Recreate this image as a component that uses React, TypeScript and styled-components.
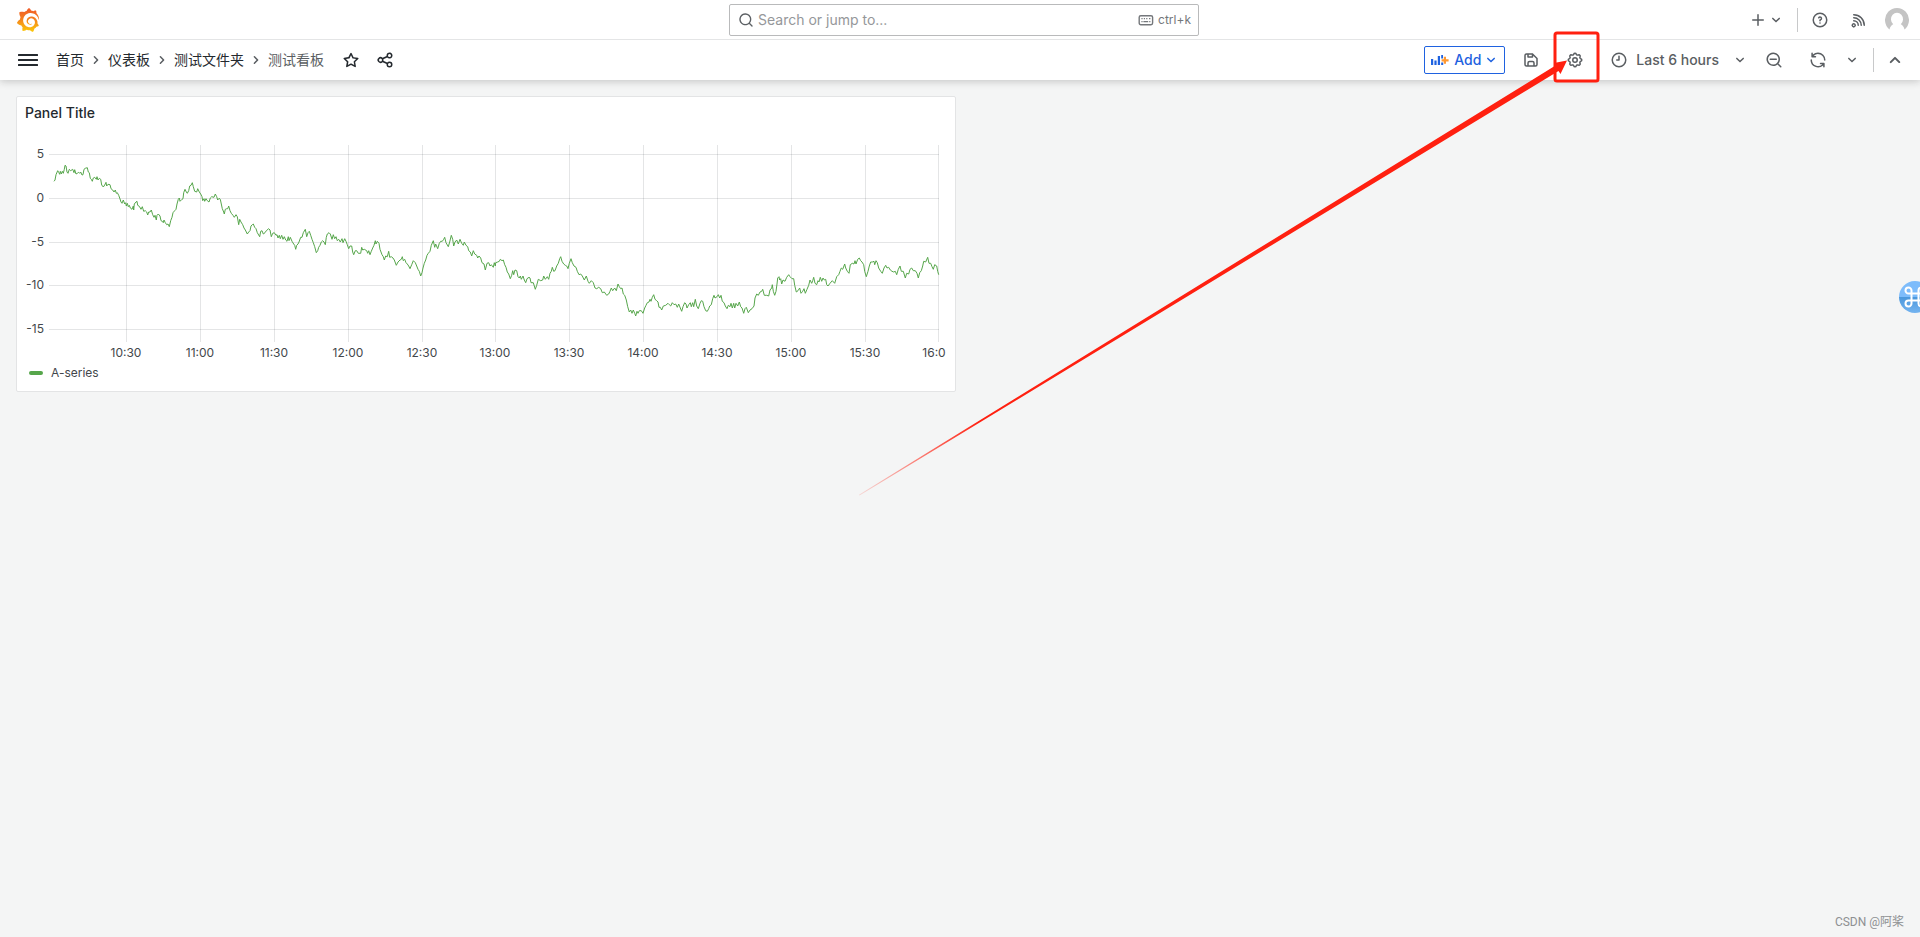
import React from "react";
import styled, { createGlobalStyle } from "styled-components";
import { SiGrafana } from "react-icons/si";

const GlobalStyle = createGlobalStyle`
  *, *::before, *::after { box-sizing: border-box; }
  html, body { margin: 0; padding: 0; }
  body {
    background: #f4f5f5;
    color: #24292e;
    font-family: Inter, "Noto Sans CJK SC", sans-serif;
    font-size: 14px;
    line-height: 22px;
  }
  button, input { font: inherit; }
`;

/* ---------- icons ---------- */

const paths = {
  angleRight:
    "M14.83,11.29,10.59,7.05a1,1,0,0,0-1.42,0,1,1,0,0,0,0,1.41L12.71,12,9.17,15.54a1,1,0,0,0,0,1.41,1,1,0,0,0,.71.29,1,1,0,0,0,.71-.29l4.24-4.24A1,1,0,0,0,14.83,11.29Z",
  angleDown:
    "M17,9.17a1,1,0,0,0-1.41,0L12,12.71,8.46,9.17a1,1,0,0,0-1.41,0,1,1,0,0,0,0,1.42l4.24,4.24a1,1,0,0,0,1.42,0L17,10.59A1,1,0,0,0,17,9.17Z",
  angleUp:
    "M17,13.41,12.71,9.17a1,1,0,0,0-1.42,0L7.05,13.41a1,1,0,0,0,0,1.42,1,1,0,0,0,1.41,0L12,11.29l3.54,3.54a1,1,0,0,0,.7.29,1,1,0,0,0,.71-.29A1,1,0,0,0,17,13.41Z",
  search:
    "M21.71,20.29,18,16.61A9,9,0,1,0,16.61,18l3.68,3.68a1,1,0,0,0,1.42,0A1,1,0,0,0,21.71,20.29ZM11,18a7,7,0,1,1,7-7A7,7,0,0,1,11,18Z",
  searchMinus:
    "M21.71,20.29,18,16.61A9,9,0,1,0,16.61,18l3.68,3.68a1,1,0,0,0,1.42,0A1,1,0,0,0,21.71,20.29ZM11,18a7,7,0,1,1,7-7A7,7,0,0,1,11,18Zm4-8H7a1,1,0,0,0,0,2h8a1,1,0,0,0,0-2Z",
  plus: "M19,11H13V5a1,1,0,0,0-2,0v6H5a1,1,0,0,0,0,2h6v6a1,1,0,0,0,2,0V13h6a1,1,0,0,0,0-2Z",
  clock:
    "M12,2A10,10,0,1,0,22,12,10,10,0,0,0,12,2Zm0,18a8,8,0,1,1,8-8A8,8,0,0,1,12,20ZM12,6a1,1,0,0,0-1,1v4H9a1,1,0,0,0,0,2h3a1,1,0,0,0,1-1V7A1,1,0,0,0,12,6Z",
  question:
    "M11.29,15.29a1.58,1.58,0,0,0-.12.15.76.76,0,0,0-.09.18.64.64,0,0,0-.06.18,1.36,1.36,0,0,0,0,.2.84.84,0,0,0,.08.38.9.9,0,0,0,.54.54.94.94,0,0,0,.76,0,.9.9,0,0,0,.54-.54A1,1,0,0,0,13,16a1,1,0,0,0-.29-.71A1,1,0,0,0,11.29,15.29ZM12,2A10,10,0,1,0,22,12,10,10,0,0,0,12,2Zm0,18a8,8,0,1,1,8-8A8,8,0,0,1,12,20ZM12,7A3,3,0,0,0,9.4,8.5a1,1,0,1,0,1.73,1A1,1,0,0,1,12,9a1,1,0,0,1,0,2,1,1,0,0,0-1,1v1a1,1,0,0,0,2,0v-.18A3,3,0,0,0,12,7Z",
  save: "M20.71,9.29l-6-6a1,1,0,0,0-.32-.21A1.09,1.09,0,0,0,14,3H6A3,3,0,0,0,3,6V18a3,3,0,0,0,3,3H18a3,3,0,0,0,3-3V10A1,1,0,0,0,20.71,9.29ZM9,5h4V7H9Zm6,14H9V16a1,1,0,0,1,1-1h4a1,1,0,0,1,1,1Zm4-1a1,1,0,0,1-1,1H17V16a3,3,0,0,0-3-3H10a3,3,0,0,0-3,3v3H6a1,1,0,0,1-1-1V6A1,1,0,0,1,6,5H7V8A1,1,0,0,0,8,9h6a1,1,0,0,0,1-1V6.41l4,4Z",
  share:
    "M18,14a4,4,0,0,0-3.08,1.48l-5.1-2.35a3.64,3.64,0,0,0,0-2.26l5.1-2.35A4,4,0,1,0,14,6a4.17,4.17,0,0,0,.07.71L8.79,9.14a4,4,0,1,0,0,5.72l5.28,2.43A4.17,4.17,0,0,0,14,18a4,4,0,1,0,4-4ZM18,4a2,2,0,1,1-2,2A2,2,0,0,1,18,4ZM6,14a2,2,0,1,1,2-2A2,2,0,0,1,6,14Zm12,6a2,2,0,1,1,2-2A2,2,0,0,1,18,20Z",
  star: "M22,9.67A1,1,0,0,0,21.14,9l-5.69-.83L12.9,3a1,1,0,0,0-1.8,0L8.55,8.16,2.86,9a1,1,0,0,0-.81.68,1,1,0,0,0,.25,1l4.13,4-1,5.68A1,1,0,0,0,6.9,21.44L12,18.77l5.1,2.67a.93.93,0,0,0,.46.12,1,1,0,0,0,.59-.19,1,1,0,0,0,.4-1l-1-5.68,4.13-4A1,1,0,0,0,22,9.67Zm-6.15,4a1,1,0,0,0-.29.88l.72,4.2-3.76-2a1.06,1.06,0,0,0-.94,0l-3.76,2,.72-4.2a1,1,0,0,0-.29-.88l-3-3,4.21-.61a1,1,0,0,0,.76-.55L12,5.7l1.88,3.82a1,1,0,0,0,.76.55l4.21.61Z",
  sync: "M19.91,15.51H15.38a1,1,0,0,0,0,2h2.4A8,8,0,0,1,4,12a1,1,0,0,0-2,0,10,10,0,0,0,16.88,7.23V21a1,1,0,0,0,2,0V16.5A1,1,0,0,0,19.91,15.51ZM12,2A10,10,0,0,0,5.12,4.77V3a1,1,0,0,0-2,0V7.5a1,1,0,0,0,1,1h4.5a1,1,0,0,0,0-2H6.22A8,8,0,0,1,20,12a1,1,0,0,0,2,0A10,10,0,0,0,12,2Z",
  rss: "M2.88,16.88a3,3,0,0,0,0,4.24,3,3,0,0,0,4.24,0,3,3,0,0,0-4.24-4.24Zm2.83,2.83a1,1,0,0,1-1.42-1.42,1,1,0,0,1,1.42,0A1,1,0,0,1,5.71,19.71ZM5,12a1,1,0,0,0,0,2,5,5,0,0,1,5,5,1,1,0,0,0,2,0,7,7,0,0,0-7-7ZM5,8a1,1,0,0,0,0,2,9,9,0,0,1,9,9,1,1,0,0,0,2,0,11,11,0,0,0-11-11ZM5,4A1,1,0,0,0,5,6,13,13,0,0,1,18,19a1,1,0,0,0,2,0A15,15,0,0,0,5,4Z",
  menu: "M1,4.800h22a1,1,0,0,1,0,2.400H1A1,1,0,0,1,1,4.800ZM1,10.800h22a1,1,0,0,1,0,2.400H1a1,1,0,0,1,0-2.400ZM1,16.800h22a1,1,0,0,1,0,2.400H1a1,1,0,0,1,0-2.400Z",
};

const Svg = styled.svg<{ $size: number }>`
  display: block;
  flex: none;
  width: ${(p) => p.$size}px;
  height: ${(p) => p.$size}px;
  fill: currentColor;
`;

const Icon = ({ name, size = 18 }: { name: keyof typeof paths; size?: number }) => (
  <Svg $size={size} viewBox="0 0 24 24" aria-hidden="true">
    <path d={paths[name]} />
  </Svg>
);

/* Gear with eight rounded teeth */
const gearPath = (() => {
  const steps = 96;
  const pts: string[] = [];
  for (let i = 0; i < steps; i++) {
    const a = (i / steps) * Math.PI * 2;
    const wave = Math.cos(a * 8);
    const r = 8.1 + Math.sign(wave) * Math.pow(Math.abs(wave), 0.6) * 0.9;
    pts.push(`${(12 + r * Math.cos(a)).toFixed(2)},${(12 + r * Math.sin(a)).toFixed(2)}`);
  }
  return `M${pts.join("L")}Z`;
})();

const GearIcon = () => (
  <Svg $size={18} viewBox="0 0 24 24" aria-hidden="true">
    <g fill="none" stroke="currentColor" strokeWidth="2" strokeLinejoin="round">
      <path d={gearPath} />
      <circle cx="12" cy="12" r="3" />
    </g>
  </Svg>
);

const KeyboardIcon = () => (
  <Svg $size={16} viewBox="0 0 16 16" aria-hidden="true">
    <rect x="1.2" y="3.7" width="13.4" height="9" rx="1.6" fill="none" stroke="currentColor" strokeWidth="1.4" />
    <path
      d="M3.4 6.7h1.2M5.8 6.7h1.2M8.2 6.7h1.2M11 6.7h1.4M3.4 9.7h1.2M5.4 9.7h4.8M11.2 9.7h1.2"
      stroke="currentColor"
      strokeWidth="1.3"
    />
  </Svg>
);

const PanelAddIcon = () => (
  <Svg $size={18} viewBox="0 0 18 18" aria-hidden="true">
    <path d="M0 8h2.200v6H0zM3.400 9.500h2.200V14H3.400zM6.800 5h2.200v9H6.800zM10.200 11.500h2V14h-2zM10.200 4h1.800v3.400h-1.800z" />
    <path d="M12.800 5.800h2.200v2.400h2.600v2.200H15v2.400h-2.200v-2.400h-2.200V8.200h2.200z" fill="#ff9830" />
  </Svg>
);

/* ---------- top bar ---------- */

const Header = styled.header`
  position: relative;
  background: #fff;
  box-shadow: 0 1px 8px rgba(24, 26, 27, 0.24);
`;

const TopBar = styled.div`
  display: grid;
  grid-template-columns: 3fr 2fr 3fr;
  gap: 8px;
  align-items: center;
  height: 40px;
  padding: 0 8px 0 16px;
  border-bottom: 1px solid #e4e5e6;
`;

const HomeLink = styled.a`
  display: flex;
  justify-self: start;
  svg { display: block; width: 24px; height: 24px; fill: url(#brand); }
`;

const SearchBox = styled.label`
  display: flex;
  align-items: center;
  gap: 4px;
  height: 32px;
  padding: 0 7px 0 8px;
  border: 1px solid #b9babb;
  border-radius: 2px;
  color: #5c6064;
`;

const SearchInput = styled.input`
  flex: 1;
  min-width: 0;
  padding: 0;
  border: 0;
  outline: 0;
  background: none;
  color: #24292e;
  &::placeholder { color: #95979a; opacity: 1; }
`;

const Shortcut = styled.span`
  display: flex;
  align-items: center;
  gap: 4px;
  color: #74777b;
  font-size: 12px;
  line-height: 18px;
`;

const Actions = styled.div`
  display: flex;
  align-items: center;
  justify-content: flex-end;
`;

const Divider = styled.span<{ $before?: number; $after?: number }>`
  width: 1px;
  height: 24px;
  margin: 0 ${(p) => p.$after ?? 0}px 0 ${(p) => p.$before ?? 0}px;
  background: #c8c9ca;
`;

const IconButton = styled.button<{ $width?: number; $strong?: boolean }>`
  display: flex;
  flex: none;
  align-items: center;
  justify-content: center;
  width: ${(p) => p.$width ?? 32}px;
  height: 32px;
  padding: 0;
  border: 0;
  background: none;
  color: ${(p) => (p.$strong ? "#24292e" : "#5a5e62")};
  cursor: pointer;
`;

/* ---------- navigation bar ---------- */

const NavBar = styled.nav`
  display: flex;
  align-items: center;
  height: 40px;
  padding: 0 9px 0 12px;
`;

const Crumbs = styled.ol`
  display: flex;
  align-items: center;
  margin: 0 10px 0 12px;
  padding: 0;
  list-style: none;
`;

const Crumb = styled.li`
  display: flex;
  align-items: center;
  color: #5a5e62;
  svg { margin: 0 3px; }
`;

const CrumbLink = styled.a`
  color: #24292e;
  text-decoration: none;
`;

const NavActions = styled(Actions)`
  flex: 1;
`;

const AddButton = styled.button`
  display: flex;
  align-items: center;
  height: 28px;
  margin-right: 10px;
  padding: 0 4px 0 6px;
  border: 1px solid #1f62e0;
  border-radius: 2px;
  background: none;
  color: #1f62e0;
  font-weight: 500;
  cursor: pointer;
  span { margin: 0 1px 0 5px; }
`;

const TimeButton = styled(IconButton)`
  width: auto;
  gap: 8px;
  padding: 0 7px;
  font-weight: 500;
  span { margin-right: 4px; }
`;

/* ---------- dashboard ---------- */

const Dashboard = styled.main`
  display: grid;
  grid-template-columns: 1fr 1fr;
  gap: 8px;
  padding: 16px;
`;

const Panel = styled.section`
  min-width: 0;
  border: 1px solid #e3e4e5;
  border-radius: 2px;
  background: #fff;
`;

const PanelTitle = styled.h2`
  margin: 0;
  padding: 0 8px;
  font-size: 14px;
  font-weight: 500;
  line-height: 32px;
`;

const PanelBody = styled.div`
  padding: 8px 8px 6px;
`;

const Chart = styled.svg`
  display: block;
  width: 100%;
  height: auto;
  overflow: hidden;
  text { font-size: 12px; fill: #43474b; }
`;

const Legend = styled.div`
  display: flex;
  align-items: center;
  gap: 8px;
  height: 24px;
  padding-left: 4px;
  color: #43474b;
  font-size: 12px;
`;

const LegendMark = styled.span`
  width: 14px;
  height: 4px;
  border-radius: 2px;
  background: #56a64b;
`;

/* Series samples, x and y in thirds of a pixel from the canvas corner */
const sampleGroups: { offset: number; points: string }[] = [
  {
    offset: 0,
    points:
      "162,154 165,150 168,134 173,122 176,127 179,133 181,124 184,132 187,124 190,130 193,118 195,106 198,108 201,126 204,130 208,118 212,122 218,118 222,128 224,119 228,132 232,130 236,127 239,130 242,126 246,135 249,134 252,118 256,115 262,113 265,126 268,128 271,145 274,148 277,154 280,144 284,142 289,148 291,140 294,150 298,145 302,148 305,165 310,171 314,165 318,157 320,168 324,163 330,164 333,176 338,180 342,186 346,180 349,190 352,188 356,196 359,204 363,216 366,220 370,210 374,222 377,218 379,228 382,220 385,230 388,226 391,234 396,238 400,228 401,240 403,222 408,216 411,214 413,226 418,229 423,238 427,230 431,244 436,242 440,246 443,255 446,246 450,246 454,240 458,254 462,262 465,256 469,270 471,256 475,252 480,258 483,272 487,274 490,278 492,270 496,278 500,284 504,282 508,290 512,272 516,262 519,248 524,242 528,238 531,222 535,208 538,204 540,214 546,208 549,206 551,188 555,178 559,186 562,190 566,182 569,168 573,166 577,158 580,170 584,184 590,186 593,176 598,186 602,192 606,200 608,212 612,206 614,214 618,206 622,212 627,216 631,204 635,200 642,202 646,192 650,200 653,210 657,205 661,208 664,222 667,236 671,246 673,252 676,238 680,236 683,236 686,228 690,242 694,250 699,256 703,262 708,254 712,260 716,284 719,268 723,276 728,284 732,294 736,300 742,312 746,306 750,302 753,288 757,284 760,282 764,292 768,296 772,308 779,320 782,304 786,302 790,312 795,308 799,302 806,296 810,300 814,320 818,310 823,308 828,316 831,314 834,324 838,316 841,326 845,316 849,328 853,320 857,330 861,334 865,320 867,332 871,322 876,334 881,342 884,346 887,358 890,346 894,342 897,336 902,322 906,322 910,308 916,298 920,320 924,308 928,304 932,316 936,328 940,338 944,350 949,368 953,362 956,352 960,346 964,336 968,332 972,336 976,344 979,322 982,312",
  },
  {
    offset: 960,
    points:
      "27,308 31,312 36,328 40,314 44,326 48,320 52,332 56,328 61,336 66,326 69,338 74,326 78,334 82,344 86,356 90,348 95,348 98,366 101,374 106,362 110,362 115,370 122,370 125,352 128,360 133,358 140,362 143,370 146,362 150,374 154,364 158,354 162,346 166,332 168,342 172,334 177,340 180,358 186,374 190,380 193,390 197,378 202,380 206,364 209,382 214,380 219,384 223,390 229,406 234,396 240,390 244,388 247,380 250,392 254,388 258,398 262,402 266,408 270,416 275,404 280,392 286,398 290,408 294,418 298,424 302,438 306,428 309,414 313,400 317,390 321,376 325,370 330,364 334,346 340,332 344,352 347,342 353,356 358,340 362,334 367,334 371,328 374,322 378,338 385,350 389,336 394,316 398,328 401,348 405,336 410,330 415,342 420,328 425,340 430,346 433,336 438,346 443,350 446,362 451,366 455,378 460,362 464,372 470,376 473,384 477,378 482,384 486,398 492,402 496,420 501,400 506,398 510,408 514,404 520,412 523,398 526,408 527,398 533,396 538,394 541,388 546,392 550,390 554,404 558,412 562,426 566,432 571,446 575,436 578,422 581,434 585,420 590,422 594,440 598,444 601,438 604,448 609,438 613,450 617,458 621,446 627,442 630,444 633,458 640,458 646,478 650,466 655,448 662,452 668,450 671,438 676,448 682,440 686,448 690,430 694,424 697,412 701,424 705,422 710,408 715,400 719,386 722,380 726,394 731,402 736,406 740,408 744,416 748,400 753,386 757,398 762,408 768,412 772,424 777,434 782,432 787,438 793,450 799,438 804,454 808,460 814,452 820,458 825,474 830,476 836,472 842,476 847,488 853,486 860,496 866,492 870,484 874,474 878,482 884,474 889,482 894,462 898,470 902,476 906,474 910,492 914,496 919,510 923,530 928,546 932,540 936,550 940,540 944,550 947,558 951,544 954,550 958,542 964,542 969,550",
  },
  {
    offset: 1920,
    points:
      "14,534 18,526 22,518 27,516 30,508 33,514 37,502 41,494 45,508 50,512 54,516 57,532 61,532 65,540 70,528 77,526 84,520 88,524 92,528 97,518 102,524 107,522 112,532 116,522 121,534 125,544 129,530 134,518 138,522 141,534 146,524 151,518 154,530 158,518 161,530 164,516 166,508 170,528 175,536 180,520 184,512 188,514 192,530 197,542 202,544 206,536 209,528 214,524 218,506 222,496 225,504 231,500 235,494 239,504 243,496 247,514 252,518 256,528 261,536 265,526 270,530 273,520 277,534 281,520 284,534 288,520 293,528 298,516 302,530 306,534 311,550 315,536 319,532 325,548 330,540 336,536 342,528 345,504 350,492 355,496 360,486 365,484 368,478 373,496 380,496 386,498 390,480 395,474 397,464 400,484 404,496 408,484 411,462 413,444 417,440 419,450 422,446 425,462 429,450 435,454 440,442 446,434 450,440 456,446 461,446 464,466 469,486 474,482 479,474 483,490 488,484 492,476 496,490 501,478 506,466 510,450 515,460 518,452 521,442 525,460 530,464 534,452 537,456 541,442 545,454 549,444 553,450 557,448 560,464 564,468 570,460 577,452 584,460 590,440 596,434 600,424 604,414 608,418 614,402 617,414 622,424 627,430 631,404 637,400 642,402 645,392 648,402 653,388 658,384 662,392 666,396 671,404 674,424 679,440 684,424 688,408 692,396 697,396 702,394 704,404 708,392 712,398 716,414 722,424 727,430 732,414 737,406 741,414 746,412 751,420 756,424 761,426 766,424 770,434 775,418 780,408 784,424 790,424 796,444 800,430 806,432 810,418 815,414 820,422 826,422 831,430 835,444 839,428 844,422 848,408 851,394 857,396 863,382 867,400 872,400 876,410 880,418 884,404 890,408 893,424 896,434",
  },
];

const seriesPoints = sampleGroups
  .flatMap(({ offset, points }) =>
    points.split(" ").map((pair) => {
      const [x, y] = pair.split(",").map(Number);
      return `${((x + offset) / 3 - 25).toFixed(1)},${(y / 3 - 7).toFixed(1)}`;
    })
  )
  .join(" ");

const yTicks = [
  { label: "5", y: 17 },
  { label: "0", y: 61 },
  { label: "-5", y: 105 },
  { label: "-10", y: 148 },
  { label: "-15", y: 192 },
];

const xTicks = [
  { label: "10:30", x: 101 },
  { label: "11:00", x: 175 },
  { label: "11:30", x: 249 },
  { label: "12:00", x: 323 },
  { label: "12:30", x: 397 },
  { label: "13:00", x: 470 },
  { label: "13:30", x: 544 },
  { label: "14:00", x: 618 },
  { label: "14:30", x: 692 },
  { label: "15:00", x: 766 },
  { label: "15:30", x: 840 },
  { label: "16:0", x: 909 },
];

const gridX = xTicks.map((t, i) => (i === xTicks.length - 1 ? 913 : t.x));

const TimeSeries = () => (
  <Chart viewBox="0 0 922 224" role="img" aria-label="A-series over the last 6 hours">
    <g stroke="#24292e" strokeOpacity="0.12">
      {yTicks.map((t) => (
        <line key={t.label} x1="24" x2="914" y1={t.y + 0.5} y2={t.y + 0.5} />
      ))}
      {gridX.map((x) => (
        <line key={x} x1={x + 0.5} x2={x + 0.5} y1="8" y2="205" />
      ))}
    </g>
    {yTicks.map((t) => (
      <text key={t.label} x="19" y={t.y + 4} textAnchor="end">
        {t.label}
      </text>
    ))}
    {xTicks.map((t) => (
      <text key={t.label} x={t.x} y="220" textAnchor="middle">
        {t.label}
      </text>
    ))}
    <polyline points={seriesPoints} fill="none" stroke="#56a64b" strokeWidth="1" />
  </Chart>
);

/* ---------- overlays ---------- */

const Annotation = styled.svg`
  position: absolute;
  top: 0;
  right: 0;
  width: 1080px;
  height: 520px;
  pointer-events: none;
`;

const AssistantButton = styled.button`
  position: absolute;
  top: 281px;
  right: -11px;
  width: 32px;
  height: 32px;
  padding: 0;
  border: 0;
  border-radius: 50%;
  background: linear-gradient(#7dbcfb 50%, #4a97dc 50%, #74b4f0);
  cursor: pointer;
`;

const Watermark = styled.span`
  position: absolute;
  right: 16px;
  bottom: 6px;
  color: #8e9092;
  font-family: Roboto, "Noto Sans CJK SC", sans-serif;
  font-size: 12px;
  line-height: 18px;
`;

const Page = styled.div`
  position: relative;
  min-height: 100vh;
  overflow: hidden;
`;

const crumbs = ["首页", "仪表板", "测试文件夹"];

export default function App() {
  return (
    <Page>
      <GlobalStyle />
      <Header>
        <TopBar>
          <HomeLink href="#home" aria-label="Grafana">
            <SiGrafana />
          </HomeLink>
          <SearchBox>
            <Icon name="search" size={16} />
            <SearchInput type="text" placeholder="Search or jump to..." aria-label="Search or jump to" />
            <Shortcut>
              <KeyboardIcon />
              ctrl+k
            </Shortcut>
          </SearchBox>
          <Actions>
            <IconButton $width={42} aria-label="New">
              <Icon name="plus" />
              <Icon name="angleDown" />
            </IconButton>
            <Divider $before={9} $after={6} />
            <IconButton aria-label="Help">
              <Icon name="question" />
            </IconButton>
            <IconButton $width={46} aria-label="News">
              <Icon name="rss" />
            </IconButton>
            <IconButton $width={30} aria-label="Profile">
              <Svg $size={24} viewBox="0 0 24 24">
                <path
                  d="M4.500 21.400A12 12 0 1 1 19.500 21.400C18.800 18.800 17.600 17.300 15.800 16.300A6 6.500 0 1 0 8.200 16.300C6.400 17.300 5.200 18.800 4.500 21.400Z"
                  fill="#c4c4c4"
                />
              </Svg>
            </IconButton>
          </Actions>
        </TopBar>
        <NavBar aria-label="Breadcrumbs">
          <IconButton $strong aria-label="Menu">
            <Icon name="menu" size={20} />
          </IconButton>
          <Crumbs>
            {crumbs.map((c) => (
              <Crumb key={c}>
                <CrumbLink href="#crumb">{c}</CrumbLink>
                <Icon name="angleRight" />
              </Crumb>
            ))}
            <Crumb aria-current="page">测试看板</Crumb>
          </Crumbs>
          <IconButton $width={34} $strong aria-label="Mark as favorite">
            <Icon name="star" />
          </IconButton>
          <IconButton $width={34} $strong aria-label="Share dashboard">
            <Icon name="share" />
          </IconButton>
          <NavActions>
            <AddButton>
              <PanelAddIcon />
              <span>Add</span>
              <Icon name="angleDown" />
            </AddButton>
            <IconButton aria-label="Save dashboard">
              <Icon name="save" />
            </IconButton>
            <IconButton $width={56} aria-label="Dashboard settings">
              <GearIcon />
            </IconButton>
            <TimeButton>
              <Icon name="clock" />
              <span>Last 6 hours</span>
              <Icon name="angleDown" />
            </TimeButton>
            <IconButton $width={36} aria-label="Zoom out">
              <Icon name="searchMinus" />
            </IconButton>
            <IconButton $width={52} aria-label="Refresh">
              <Icon name="sync" />
            </IconButton>
            <IconButton $width={16} aria-label="Refresh interval">
              <Icon name="angleDown" />
            </IconButton>
            <Divider $before={13} $after={5} />
            <IconButton aria-label="Collapse header">
              <Icon name="angleUp" size={24} />
            </IconButton>
          </NavActions>
        </NavBar>
      </Header>
      <Dashboard>
        <Panel>
          <PanelTitle>Panel Title</PanelTitle>
          <PanelBody>
            <TimeSeries />
            <Legend>
              <LegendMark />
              A-series
            </Legend>
          </PanelBody>
        </Panel>
      </Dashboard>
      <Annotation viewBox="840 0 1080 520" aria-hidden="true">
        <defs>
          <linearGradient id="brand" x1="0" y1="0" x2="0" y2="1">
            <stop offset="0" stopColor="#f05a28" />
            <stop offset="0.4" stopColor="#f47a20" />
            <stop offset="1" stopColor="#fbca0a" />
          </linearGradient>
          <linearGradient id="fade" gradientUnits="userSpaceOnUse" x1="854" y1="498" x2="980" y2="421">
            <stop offset="0" stopColor="#ff2010" stopOpacity="0.1" />
            <stop offset="1" stopColor="#ff2010" />
          </linearGradient>
        </defs>
        <path d="M859 494.700L1555.500 65.500L1554 63L1567 60.500L1560.500 74L1558.500 71L859.500 495.500Z" fill="url(#fade)" />
        <rect x="1555" y="33" width="43" height="48" rx="2" fill="none" stroke="#ff2010" strokeWidth="3" />
      </Annotation>
      <AssistantButton aria-label="Assistant">
        <Svg $size={32} viewBox="0 0 32 32">
          <path
            d="M12.500 12.500V9.500a3 3 0 1 0-3 3h13a3 3 0 1 0-3-3v13a3 3 0 1 0 3-3h-13a3 3 0 1 0 3 3z"
            fill="none"
            stroke="#fff"
            strokeWidth="2"
          />
        </Svg>
      </AssistantButton>
      <Watermark>CSDN @阿桨</Watermark>
    </Page>
  );
}
